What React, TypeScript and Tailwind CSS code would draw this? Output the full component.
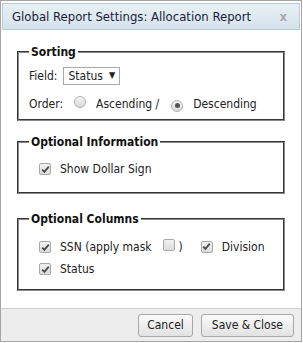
const font = { fontFamily: '"DejaVu Sans Condensed", "DejaVu Sans", sans-serif' };

function Check({ checked }: { checked: boolean }) {
  return (
    <span className="inline-flex h-[12px] w-[12px] items-center justify-center rounded-[2px] border border-[#a8a8a8] bg-gradient-to-b from-[#f2f2f2] to-[#dcdcdc]">
      {checked && (
        <svg width="9" height="9" viewBox="0 0 9 9">
          <path d="M1.2 4.6 L3.4 6.9 L7.8 1.6" fill="none" stroke="#4a4a4a" strokeWidth="1.8" />
        </svg>
      )}
    </span>
  );
}

function Radio({ checked }: { checked: boolean }) {
  return (
    <span className="inline-flex h-[12px] w-[12px] items-center justify-center rounded-full border border-[#b0b0b0] bg-gradient-to-b from-[#f4f4f4] to-[#dadada]">
      {checked && <span className="h-[5px] w-[5px] rounded-full bg-[#555]" />}
    </span>
  );
}

function Group({ title, children, className }: { title: string; children: React.ReactNode; className?: string }) {
  return (
    <fieldset className={`mx-[16px] border-2 border-[#8a8a8a] [border-style:groove] px-[10px] ${className ?? ''}`}>
      <legend className="px-[2px] text-[12px] font-bold text-[#111]">{title}</legend>
      {children}
    </fieldset>
  );
}

export default function App() {
  return (
    <div className="h-[343px] w-[303px] bg-white" style={font}>
      <div className="flex h-[342px] w-[302px] flex-col border border-[#a5a5a5] text-[12px] text-[#222]">
        <div className="mx-[1px] mt-[2px] flex h-[27px] items-center justify-between border border-[#b9ccd6] bg-gradient-to-b from-[#e8f1f5] to-[#d3e3eb] pl-[9px] pr-[12px]">
          <span className="text-[13px] text-[#1d1d3a]">Global Report Settings: Allocation Report</span>
          <span className="text-[13px] font-bold text-[#a8a8a8]">x</span>
        </div>

        <div className="flex-1 pt-[13px]">
          <Group title="Sorting" className="h-[78px]">
            <div className="mt-[6px] flex items-center gap-[6px]">
              <span>Field:</span>
              <span className="flex h-[18px] items-center gap-[6px] border border-[#a9a9a9] px-[4px]">
                Status
                <span className="text-[9px]">▼</span>
              </span>
            </div>
            <div className="mt-[10px] flex items-center">
              <span>Order:</span>
              <span className="ml-[11px]"><Radio checked={false} /></span>
              <span className="ml-[10px]">Ascending /</span>
              <span className="ml-[12px]"><Radio checked /></span>
              <span className="ml-[10px]">Descending</span>
            </div>
          </Group>

          <Group title="Optional Information" className="mt-[12px] h-[61px]">
            <div className="mt-[9px] flex items-center pl-[10px]">
              <Check checked />
              <span className="ml-[9px]">Show Dollar Sign</span>
            </div>
          </Group>

          <Group title="Optional Columns" className="mt-[16px] h-[81px]">
            <div className="mt-[10px] flex items-center pl-[10px]">
              <Check checked />
              <span className="ml-[9px]">SSN (apply mask</span>
              <span className="ml-[11px]"><Check checked={false} /></span>
              <span className="ml-[4px]">)</span>
              <span className="ml-[18px]"><Check checked /></span>
              <span className="ml-[9px]">Division</span>
            </div>
            <div className="mt-[4px] flex items-center pl-[10px]">
              <Check checked />
              <span className="ml-[9px]">Status</span>
            </div>
          </Group>
        </div>

        <div className="flex h-[33px] items-center justify-end gap-[8px] border-t border-[#d0d0d0] bg-[#ededed] pr-[7px]">
          <button className="h-[23px] rounded-[3px] border border-[#a8a8a8] bg-gradient-to-b from-[#fafafa] to-[#e2e2e2] px-[8px] text-[12px] text-[#222]">Cancel</button>
          <button className="h-[23px] rounded-[3px] border border-[#a8a8a8] bg-gradient-to-b from-[#fafafa] to-[#e2e2e2] px-[10px] text-[12px] text-[#222]">Save &amp; Close</button>
        </div>
      </div>
    </div>
  );
}
